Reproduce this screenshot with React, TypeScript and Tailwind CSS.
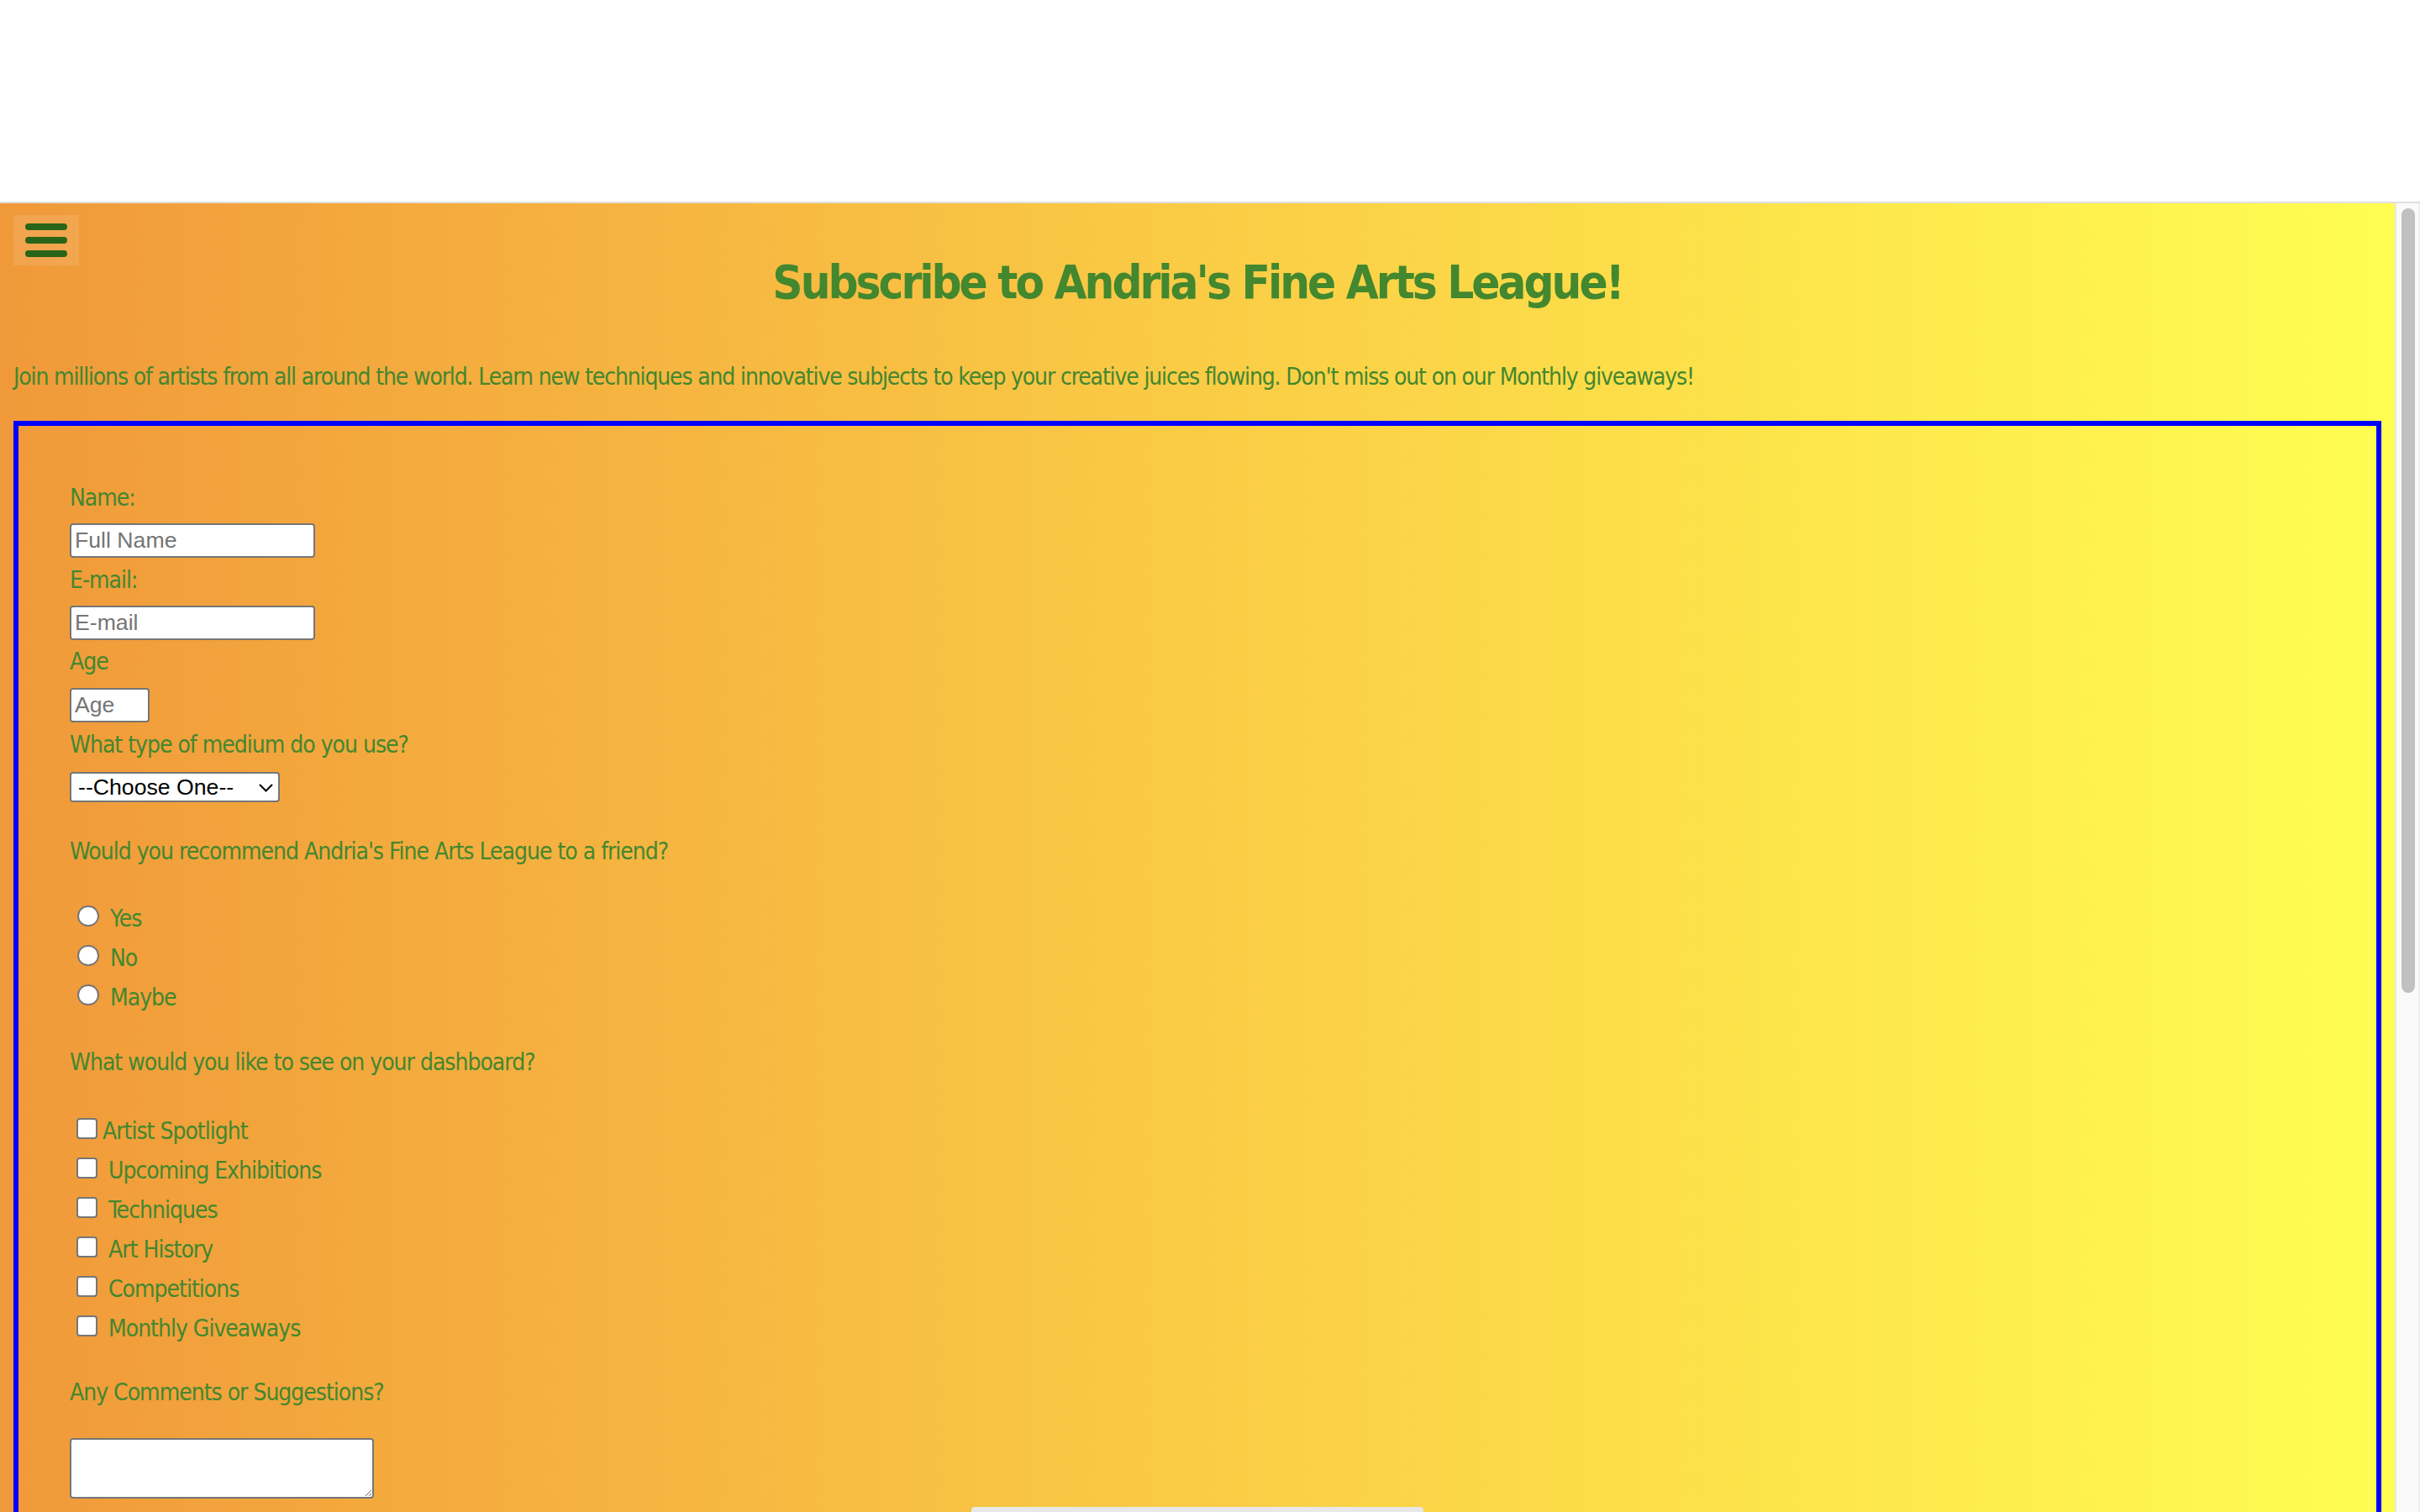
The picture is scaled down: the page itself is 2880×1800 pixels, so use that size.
import React from "react";

const inputCls =
  "block border-2 border-[#767676] rounded-[4px] bg-white px-[4px] text-[26.67px] font-['Liberation_Sans',Arial,sans-serif] font-normal tracking-normal text-black placeholder:text-[#757575] outline-none";

function Radio({ label }: { label: string }) {
  return (
    <div className="h-[47px] whitespace-nowrap">
      <input
        type="radio"
        name="recommend"
        className="appearance-none inline-block align-baseline w-[26px] h-[25px] ml-[9px] mr-[6px] rounded-full border-2 border-[#767676] bg-white"
      />{" "}
      {label}
    </div>
  );
}

function Check({ label, tight }: { label: string; tight?: boolean }) {
  return (
    <div className="h-[47px] whitespace-nowrap">
      <input
        type="checkbox"
        className="appearance-none inline-block align-baseline w-[25px] h-[25px] ml-[8px] mr-[6px] rounded-[4px] border-2 border-[#767676] bg-white"
      />
      {tight ? "" : " "}
      {label}
    </div>
  );
}

export default function App() {
  return (
    <div className="h-[1800px] w-full overflow-hidden flex flex-col bg-white">
      <div className="h-[240px] shrink-0 bg-white" />
      <div className="h-[2px] shrink-0 bg-[#e0e0e0]" />
      <div className="flex flex-1 min-h-0">
        <main className="relative flex-1 min-w-0 overflow-hidden bg-linear-to-r from-[#f0993a] to-[#fffe51] text-[#43872f] font-['DejaVu_Sans_Condensed','DejaVu_Sans',sans-serif] tracking-[-1px]">
          <button
            type="button"
            aria-label="Menu"
            className="absolute left-4 top-[14px] w-[78px] h-[60px] bg-white/10 flex flex-col items-center justify-center gap-2"
          >
            <span className="block w-[50px] h-2 rounded-full bg-[#2a6418]" />
            <span className="block w-[50px] h-2 rounded-full bg-[#2a6418]" />
            <span className="block w-[50px] h-2 rounded-full bg-[#2a6418]" />
          </button>

          <h1 className="mt-[54px] text-center text-[56px] font-bold leading-[80px] tracking-[-3px]">
            Subscribe to Andria's Fine Arts League!
          </h1>

          <p className="mt-[49px] ml-4 text-[28px] leading-[47px] tracking-[-1.15px] whitespace-nowrap">
            Join millions of artists from all around the world. Learn new techniques and innovative subjects to keep your creative juices flowing. Don't miss out on our Monthly giveaways!
          </p>

          <form className="mt-[29px] mx-4 border-[6px] border-[#0000ff] pt-[62px] px-[61px] text-[28px] leading-[47px]">
            <label className="block">Name:</label>
            <input className={`${inputCls} mt-[7px] w-[292px] h-[41px]`} placeholder="Full Name" />

            <label className="block mt-[3px]">E-mail:</label>
            <input className={`${inputCls} mt-[7px] w-[292px] h-[41px]`} placeholder="E-mail" />

            <label className="block mt-[2px]">Age</label>
            <input className={`${inputCls} mt-[8px] w-[95px] h-[41px]`} placeholder="Age" />

            <label className="block mt-[3px]">What type of medium do you use?</label>
            <div className="relative mt-[9px] w-[250px] h-[36px]">
              <select className="appearance-none block w-full h-full border-2 border-[#767676] rounded-[4px] bg-white pl-[8px] text-[26.67px] leading-[30px] font-['Liberation_Sans',Arial,sans-serif] tracking-normal text-black outline-none">
                <option>--Choose One--</option>
                <option>Painting</option>
                <option>Drawing</option>
                <option>Sculpture</option>
              </select>
              <svg
                className="absolute right-[8px] top-[14px] w-[17px] h-[10px] pointer-events-none"
                viewBox="0 0 17 10"
                fill="none"
                stroke="#000"
                strokeWidth="2"
              >
                <path d="M1 1l7.5 7.5L16 1" />
              </svg>
            </div>

            <p className="mt-[35px]">Would you recommend Andria's Fine Arts League to a friend?</p>

            <div className="mt-[33px]">
              <Radio label="Yes" />
              <Radio label="No" />
              <Radio label="Maybe" />
            </div>

            <p className="mt-[30px]">What would you like to see on your dashboard?</p>

            <div className="mt-[35px]">
              <Check label="Artist Spotlight" tight />
              <Check label="Upcoming Exhibitions" />
              <Check label="Techniques" />
              <Check label="Art History" />
              <Check label="Competitions" />
              <Check label="Monthly Giveaways" />
            </div>

            <p className="mt-[29px]">Any Comments or Suggestions?</p>

            <textarea className="mt-[31px] block w-[362px] h-[72px] border-2 border-[#767676] rounded-[4px] bg-white outline-none" />

            <div className="mt-[10px] mx-auto w-[538px] h-[60px] rounded-[4px] bg-[#e8e8e8]" />
          </form>
        </main>

        <div className="w-[30px] shrink-0 flex flex-col border-l-2 border-l-[#e8e8e8] border-r-2 border-r-[#efefef] bg-[#fafafa]">
          <div className="mt-[6px] ml-[6px] w-[16px] h-[934px] rounded-full bg-[#c1c1c1]" />
        </div>
      </div>
    </div>
  );
}
